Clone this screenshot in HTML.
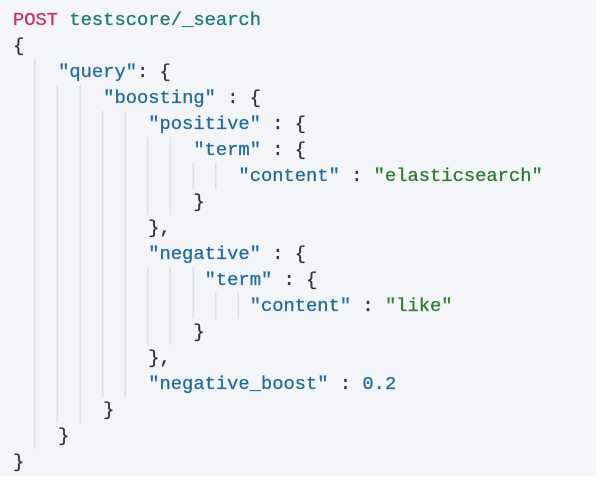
<!DOCTYPE html>
<html><head><meta charset="utf-8"><style>
html,body{margin:0;padding:0;background:#fff;}
body{width:609px;height:486px;position:relative;overflow:hidden;}
.bg{position:absolute;left:0;top:0;width:596px;height:476px;background:#f4f5f9;}
.l{position:absolute;left:13px;height:26px;line-height:26px;font-family:"Liberation Mono",monospace;font-size:18.8px;color:#333;white-space:pre;-webkit-text-stroke:0.3px currentColor;}
.b{position:absolute;left:13px;height:26px;background:repeating-linear-gradient(to right,transparent 0 21.1px,#dcdee3 21.1px 22.6px);}
.k{color:#1d6c9c}.s{color:#2a7d2e}.m{color:#c2305c}.p{color:#1a7a78}.n{color:#1d6c9c}
</style></head><body>
<div class="bg"></div>
<div class="l" style="top:7px"><span class="m">POST</span> <span class="p">testscore/_search</span></div>
<div class="l" style="top:33px">{</div>
<div class="b" style="top:59px;width:33.9px"></div><div class="l" style="top:59px">    <span class="k">"query"</span>: {</div>
<div class="b" style="top:85px;width:79.1px"></div><div class="l" style="top:85px">        <span class="k">"boosting"</span> : {</div>
<div class="b" style="top:111px;width:124.3px"></div><div class="l" style="top:111px">            <span class="k">"positive"</span> : {</div>
<div class="b" style="top:137px;width:169.5px"></div><div class="l" style="top:137px">                <span class="k">"term"</span> : {</div>
<div class="b" style="top:163px;width:214.7px"></div><div class="l" style="top:163px">                    <span class="k">"content"</span> : <span class="s">"elasticsearch"</span></div>
<div class="b" style="top:189px;width:169.5px"></div><div class="l" style="top:189px">                }</div>
<div class="b" style="top:215px;width:124.3px"></div><div class="l" style="top:215px">            },</div>
<div class="b" style="top:241px;width:124.3px"></div><div class="l" style="top:241px">            <span class="k">"negative"</span> : {</div>
<div class="b" style="top:267px;width:180.8px"></div><div class="l" style="top:267px">                 <span class="k">"term"</span> : {</div>
<div class="b" style="top:293px;width:226px"></div><div class="l" style="top:293px">                     <span class="k">"content"</span> : <span class="s">"like"</span></div>
<div class="b" style="top:319px;width:169.5px"></div><div class="l" style="top:319px">                }</div>
<div class="b" style="top:345px;width:124.3px"></div><div class="l" style="top:345px">            },</div>
<div class="b" style="top:371px;width:124.3px"></div><div class="l" style="top:371px">            <span class="k">"negative_boost"</span> : <span class="n">0.2</span></div>
<div class="b" style="top:397px;width:79.1px"></div><div class="l" style="top:397px">        }</div>
<div class="b" style="top:423px;width:33.9px"></div><div class="l" style="top:423px">    }</div>
<div class="l" style="top:449px">}</div>
</body></html>
